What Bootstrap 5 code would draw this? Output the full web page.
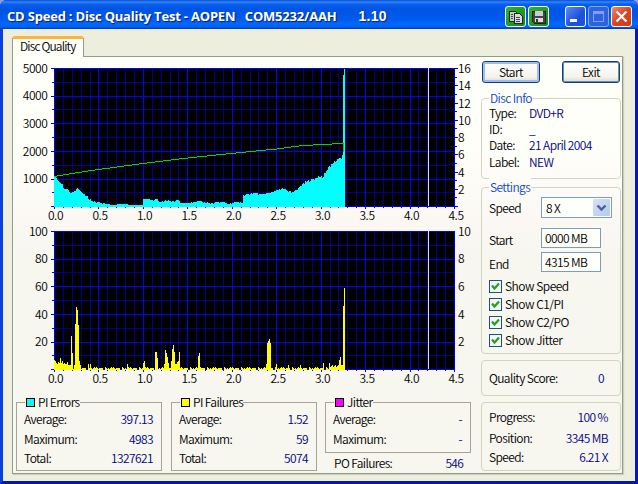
<!DOCTYPE html>
<html lang="en">
<head>
<meta charset="utf-8">
<meta name="viewport" content="width=device-width, initial-scale=1">
<title>CD Speed : Disc Quality Test</title>
<link href="https://cdn.jsdelivr.net/npm/bootstrap@5.3.0/dist/css/bootstrap.min.css" rel="stylesheet">
<style>
body{width:638px;height:484px;overflow:hidden;background:#8f9be0;font-family:"Noto Sans CJK JP","Liberation Sans",sans-serif;font-weight:350;font-size:12px;line-height:16px;letter-spacing:-.6px;color:#000;white-space:nowrap}
.win{width:638px;height:484px;background:#0a12a8;border-radius:7px 7px 0 0;overflow:hidden}
.titlebar{height:29px;padding:2px 6px 0 7px;background:linear-gradient(#0a4ad0 0,#2f86fa 2px,#0a60ee 4px,#0054e3 9px,#0059ea 18px,#0268fd 24px,#0160f4 27px,#0038b4 29px)}
.caption{font:700 13px/28px "Open Sans","Noto Sans",sans-serif;letter-spacing:-.2px;color:#fff;text-shadow:1px 1px 1px #0a1e7a;white-space:pre}
.ver{font-family:"Liberation Sans",sans-serif;font-size:14px;letter-spacing:.2px;margin-left:3px}
.tools .tb:nth-child(2){margin-left:2px}
.tools .tb:nth-child(3){margin-left:16px}
.tools .tb:nth-child(4),.tools .tb:nth-child(5){margin-left:2px}
.tb{width:21px;height:21px;border:1px solid #fff;border-radius:3px}
.tb svg{display:block}
.tb-green{background:linear-gradient(135deg,#2fb42f,#0c8a14)}
.tb-blue{background:linear-gradient(135deg,#5c8cf4,#1c50dc 60%,#1a55e4)}
.tb-dim{background:#2f62e0;border-color:#86a6f2}
.tb-red{background:linear-gradient(135deg,#f08868,#dc4420 50%,#d03c18)}
.client{height:455px;border:solid #0a3fe0;border-width:0 3px 3px;border-right-color:#0718b4;border-bottom-color:#0718a8;background:#edeede;padding:7px 12px 0 9px}
.tabcap{width:72px;height:21px;border:1px solid #8f9c90;border-bottom:0;border-top:3px solid #fcb43c;border-radius:3px 3px 0 0;background:#fffffa;padding-left:7px;line-height:13px;letter-spacing:-.85px;position:relative;z-index:1}
.pane{width:611px;height:418px;margin-top:-1px;border:1px solid #8f9c90;background:linear-gradient(#fffffa 0,#fffffa 90px,#fbf8f4 165px,#f7f6ef 200px);box-shadow:1px 1px 1px #cfcfbe}
.leftcol{width:468px}
.plots{display:block;width:468px;height:335px}
.plots text{font-size:12px;letter-spacing:-.4px}
.stats{padding:10px 0 0 3px}
.sbox{width:146px;border:1px solid #aca199;margin-right:9px;padding:0 8px 0 7px}
.sbox .cap{margin:-9px 0 0 1px}
.jit{margin-left:-1px}
.tall{height:69px}.short{height:51px}
.chip{width:9px;height:9px;border:1px solid #000;margin-right:3px}
.cy{background:#0ff}.ye{background:#ff0}.mg{background:#f0f}
.cap .c0{padding:0 0 0 1px;background:#f7f6ef}
.r1{height:16px;margin-top:1px}.r2{height:16px;margin-top:4px}.r3{height:16px;margin-top:3px}
.val{color:#000080;letter-spacing:-.6px}
.stats .val,.num{letter-spacing:-.75px}
.sbox .val{letter-spacing:-.6px}
.pof{padding:2px 8px 0 9px}
.rightcol{width:140px}
.btns{padding:4px 1px 0}
.xpbtn{height:22px;width:58px;border:1px solid #0f3f74;box-shadow:inset 0 0 0 1px #6f8db0;border-radius:3px;padding:0;font-size:12px;font-weight:350;letter-spacing:-.5px;line-height:18px;color:#000;background:linear-gradient(#fff,#f4f3ec 75%,#dcd8cc)}
.xpbtn.focus{box-shadow:inset 0 0 0 2px #a0bcf4}
.grp{border:1px solid #d3d4bd;border-radius:4px;padding:0 8px 0 7px}
.grp .ttl{color:#0a46d5;margin-top:-9px}
.ttl span{background:#fffffa;padding:0 1px}
.tl2 span{background:#fdfbf7}
.k{width:40px}
.kk{width:52px}
.inp{width:60px;height:20px;border:1px solid #7f9db9;background:#fffffa;padding-left:3px;line-height:17px}
.sel{width:71px;height:21px;border:1px solid #7f9db9;background:#fffffa;padding-left:4px;line-height:19px}
.drop{width:17px;height:17px;background:linear-gradient(135deg,#d4e0fc,#b4c8f4);margin:1px;border-radius:1px}
.chk{width:13px;height:13px;border:1px solid #1c5180;background:#f6f6f2;margin-right:3px}
.chk svg{display:block}
.chkrow{height:18px}
.checks{letter-spacing:-.5px;margin-top:5px}
.g1{height:81px;margin-top:15px}.g1 .lb{margin-top:1px}
.g1 .ttl{margin-bottom:-1px}
.g2{height:167px;margin-top:8px}
.s1{margin-top:2px}.s2{margin-top:10px}.s3{margin-top:4px}
.g3{height:36px;margin-top:6px}
.g4{height:69px;margin-top:6px;padding:6px 12px 0 7px}
.p2{margin-top:5px}.p3{margin-top:3px}
</style>
<script src="https://cdn.jsdelivr.net/npm/bootstrap@5.3.0/dist/js/bootstrap.bundle.min.js"></script>
</head>
<body>
<div class="win">
  <div class="titlebar d-flex justify-content-between">
    <div class="caption">CD Speed : Disc Quality Test - AOPEN   COM5232/AAH      <span class="ver">1.10</span></div>
    <div class="d-flex pt-1 tools">
      <div class="tb tb-green"><svg width="19" height="19" shape-rendering="crispEdges"><path d="M3 4h6l2 2v8H3z" fill="#c8ccc8" stroke="#223"/><path d="M8 6h5l3 3v7H8z" fill="#d8dcd8" stroke="#223"/><path d="M5 7h2M5 9h2M5 11h2M10 10h4M10 12h4M10 14h4" stroke="#445"/></svg></div>
      <div class="tb tb-green"><svg width="19" height="19" shape-rendering="crispEdges"><path d="M3 4h13v12H5l-2-2z" fill="#444" stroke="#222"/><path d="M6 4h8v5H6z" fill="#ccc"/><path d="M6 11h8v4H6z" fill="#ddd"/><path d="M7 12h2v3H7z" fill="#333"/></svg></div>
      <div class="tb tb-blue"><svg width="19" height="19"><path d="M4 12h7v3H4z" fill="#fff"/></svg></div>
      <div class="tb tb-dim"><svg width="19" height="19" shape-rendering="crispEdges"><path d="M4 4h11v3H4z" fill="#7f9ff0"/><path d="M4.500 4.500h10v10h-10z" fill="none" stroke="#7f9ff0"/></svg></div>
      <div class="tb tb-red"><svg width="19" height="19"><path d="M4.500 4.500l10 10M14.500 4.500l-10 10" stroke="#fff" stroke-width="2.200"/></svg></div>
    </div>
  </div>
  <div class="client">
    <div class="tabcap">Disc Quality</div>
    <div class="pane d-flex">
      <div class="leftcol">
        <svg class="plots" id="plots" viewBox="13 57 468 335" shape-rendering="crispEdges"></svg>
        <div class="stats d-flex">
          <div class="sbox tall">
            <div class="cap d-flex"><span class="c0 d-flex align-items-center"><i class="chip cy"></i>PI Errors</span></div>
            <div class="r1 d-flex justify-content-between"><span>Average:</span><span class="val">397.13</span></div>
            <div class="r2 d-flex justify-content-between"><span>Maximum:</span><span class="val">4983</span></div>
            <div class="r3 d-flex justify-content-between"><span>Total:</span><span class="val">1327621</span></div>
          </div>
          <div class="sbox tall">
            <div class="cap d-flex"><span class="c0 d-flex align-items-center"><i class="chip ye"></i>PI Failures</span></div>
            <div class="r1 d-flex justify-content-between"><span>Average:</span><span class="val">1.52</span></div>
            <div class="r2 d-flex justify-content-between"><span>Maximum:</span><span class="val">59</span></div>
            <div class="r3 d-flex justify-content-between"><span>Total:</span><span class="val">5074</span></div>
          </div>
          <div class="jit">
            <div class="sbox short me-0">
              <div class="cap d-flex"><span class="c0 d-flex align-items-center"><i class="chip mg"></i>Jitter</span></div>
              <div class="r1 d-flex justify-content-between"><span>Average:</span><span class="val">-</span></div>
              <div class="r2 d-flex justify-content-between"><span>Maximum:</span><span class="val">-</span></div>
            </div>
            <div class="pof d-flex justify-content-between"><span>PO Failures:</span><span class="val">546</span></div>
          </div>
        </div>
      </div>
      <div class="rightcol">
        <div class="d-flex justify-content-between btns">
          <button class="btn xpbtn focus">Start</button><button class="btn xpbtn">Exit</button>
        </div>
        <div class="grp g1">
          <div class="ttl"><span>Disc Info</span></div>
          <div class="d-flex"><span class="k">Type:</span><span class="val">DVD+R</span></div>
          <div class="d-flex"><span class="k">ID:</span><span class="val">_</span></div>
          <div class="d-flex"><span class="k">Date:</span><span class="val">21 April 2004</span></div>
          <div class="d-flex lb"><span class="k">Label:</span><span class="val">NEW</span></div>
        </div>
        <div class="grp g2">
          <div class="ttl tl2"><span>Settings</span></div>
          <div class="d-flex align-items-center s1"><span class="kk">Speed</span><div class="sel d-flex justify-content-between"><span>8 X</span><span class="drop"><svg class="d-block" width="17" height="17"><path d="M4.500 6.500l4 4 4-4" fill="none" stroke="#4d6185" stroke-width="2.400"/></svg></span></div></div>
          <div class="d-flex s2"><span class="kk pt-1">Start</span><div class="inp">0000 MB</div></div>
          <div class="d-flex s3"><span class="kk pt-1">End</span><div class="inp">4315 MB</div></div>
          <div class="checks">
            <div class="chkrow d-flex align-items-center"><span class="chk"><svg width="11" height="11"><path d="M2 4.500l2.500 3L9 2.500" fill="none" stroke="#21a121" stroke-width="2.200"/></svg></span>Show Speed</div>
            <div class="chkrow d-flex align-items-center"><span class="chk"><svg width="11" height="11"><path d="M2 4.500l2.500 3L9 2.500" fill="none" stroke="#21a121" stroke-width="2.200"/></svg></span>Show C1/PI</div>
            <div class="chkrow d-flex align-items-center"><span class="chk"><svg width="11" height="11"><path d="M2 4.500l2.500 3L9 2.500" fill="none" stroke="#21a121" stroke-width="2.200"/></svg></span>Show C2/PO</div>
            <div class="chkrow d-flex align-items-center"><span class="chk"><svg width="11" height="11"><path d="M2 4.500l2.500 3L9 2.500" fill="none" stroke="#21a121" stroke-width="2.200"/></svg></span>Show Jitter</div>
          </div>
        </div>
        <div class="grp g3 d-flex justify-content-between align-items-center"><span>Quality Score:</span><span class="val pe-2">0</span></div>
        <div class="grp g4">
          <div class="d-flex justify-content-between"><span>Progress:</span><span class="val">100 %</span></div>
          <div class="d-flex justify-content-between p2"><span>Position:</span><span class="val">3345 MB</span></div>
          <div class="d-flex justify-content-between p3"><span>Speed:</span><span class="val">6.21 X</span></div>
        </div>
      </div>
    </div>
  </div>
</div>
<script>
const out=[];
const rect=(x,y,w,h,f)=>out.push(`<rect x="${x}" y="${y}" width="${w}" height="${h}" fill="${f}"/>`);
const label=(x,y,s,a)=>out.push(`<text x="${x}" y="${y}" text-anchor="${a}">${s}</text>`);
const L=54,R=454;
function grid(top){
  const bot=top+138;
  rect(L,top,R-L,138,'#000');
  for(let i=0;i<=45;i++){const x=Math.round(L+i*400/45);if(i%5)rect(x,top,1,138,'#00008b');rect(x,bot,1,i%5?2:3,'#0000ff');}
  for(let i=1;i<10;i+=2){const y=Math.round(top+i*13.83);rect(L,y,R-L,1,'#00008b');rect(L-2,y,2,1,'#0000ff');}
  for(let i=0;i<=10;i+=2){const y=Math.round(top+i*13.83);rect(L-3,y,R-L+3,1,'#0000ff');}
  for(let i=0;i<=45;i+=5)rect(Math.round(L+i*400/45),top,1,138,'#0000ff');
  for(let i=0;i<10;i++)label(L+1.5+i*44.5,bot+14,(i/2).toFixed(1),'middle');
  rect(428,top,1,138,'#e0e0e0');
}
/* PI errors: [x, column top] pairs */
grid(68);
const pi=[[54,176],[56,178],[60,183],[62,184],[64,189],[67,189],[70,193],[73,192],[77,188],[80,191],[83,194],[87,197],[89,200],[93,201],[97,202],[103,203],[107,204],[113,205],[120,204],[127,204],[128,205],[142,205],[143,199],[148,199],[152,200],[157,199],[159,202],[167,201],[173,201],[178,200],[181,203],[187,203],[193,202],[200,201],[203,203],[210,203],[218,202],[223,202],[228,204],[235,202],[242,203],[243,196],[247,194],[253,193],[263,194],[272,192],[277,190],[283,189],[288,191],[293,192],[298,188],[303,183],[308,181],[313,179],[318,177],[322,177],[325,173],[328,167],[332,164],[335,161],[338,159],[340,157],[341,159],[342,155]];
const seed=[0,1,0,-1,0,1,-1,0,0,1,0,-1,1];
let k=0;
for(let x=54;x<343;x++){
  while(k<pi.length-2&&pi[k+1][0]<=x)k++;
  const [a,b]=[pi[k],pi[k+1]];
  let y=Math.round(a[1]+(b[1]-a[1])*(x-a[0])/(b[0]-a[0]));
  const j=seed[x*7%13];
  if(y<204)y+=x>300?j:(x%3?0:j);
  rect(x,y,1,207-y,'#00ffff');
}
rect(343,75,1,132,'#00ffff');rect(344,69,1,138,'#00ffff');
const sp=[[54,176],[71,173],[98,169],[142,163],[187,157.500],[240,152],[276,148.500],[298,145.500],[320,144],[343,143]];
k=0;
for(let x=54;x<=343;x++){
  while(k<sp.length-2&&sp[k+1][0]<=x)k++;
  const [a,b]=[sp[k],sp[k+1]];
  rect(x,Math.round(a[1]+(b[1]-a[1])*(x-a[0])/(b[0]-a[0])),1,1,'#00d800');
}
rect(343,143,1,9,'#00d800');
rect(R,68,1,139,'#0000ff');
for(let v=0;v<=16;v++){const y=Math.round(206-v*8.625);rect(R,y,v%2?3:4,1,'#0000ff');if(v&&v%2===0)label(458,y+5,v,'start');}
for(let v=1;v<=5;v++)label(47.5,Math.round(206-v*27.66)+5,v*1000,'end');
/* PI failures: column heights by x */
grid(231);
const pk={71:34,72:17,74:5,75:46,76:63,77:60,78:45,79:9,80:5,88:6,90:6,127:6,143:7,144:9,155:18,156:18,157:12,164:6,165:20,166:17,167:13,168:7,171:9,172:21,173:25,174:18,175:6,176:6,177:8,178:9,179:18,198:14,199:17,200:3,266:6,267:27,268:29,269:31,270:27,276:6,288:5,300:5,323:7,329:7,339:10,340:13,341:5,342:5,343:64,344:82};
const lo=[2,1,2,2,3,0,2,2,1,2,0,3,2,2,1,3,2];
for(let x=54;x<345;x++){
  let h=pk[x]||lo[x*5%17];
  if(x<71)h=Math.max(h,[10,9,7,6,8,7,12,7,9,6,7,6,6,8,5,5,5][x-54]);
  if(x>329&&x<339)h=3+x%3;
  if(h)rect(x,370-h,1,h,'#ffff00');
}
rect(R,231,1,139,'#0000ff');
for(let v=1;v<=5;v++){const y=Math.round(369-v*27.66)+5;label(47.5,y,v*20,'end');label(458,y,v*2,'start');}
document.getElementById('plots').innerHTML=out.join('');
</script>
</body>
</html>
